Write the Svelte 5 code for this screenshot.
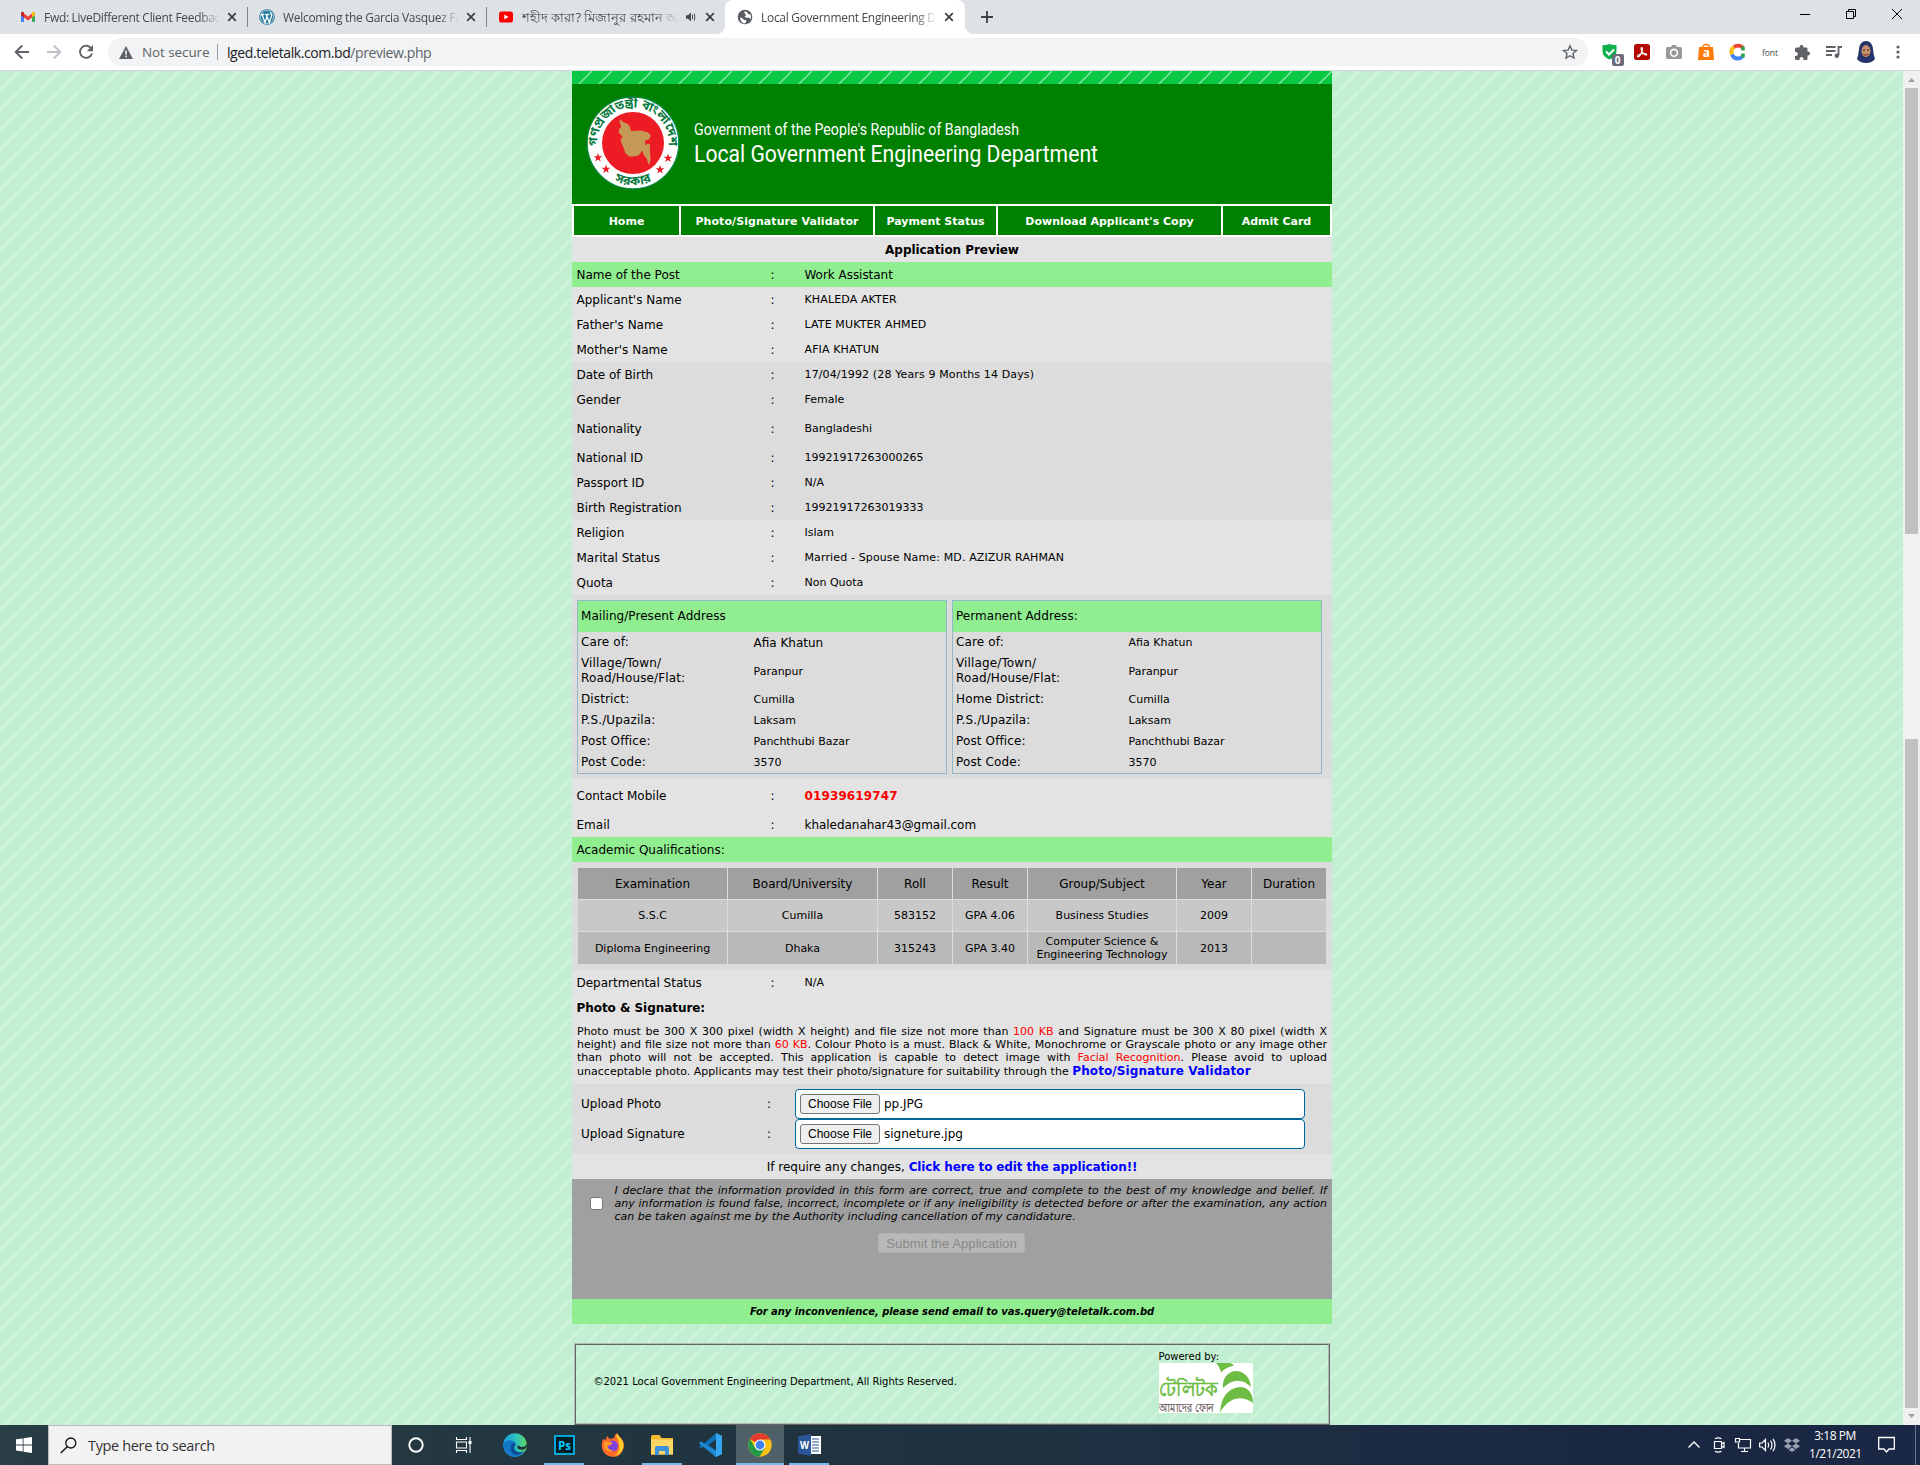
<script>
  const personal = [
    ['Name of the Post', 'Work Assistant', 'green big'],
    ["Applicant's Name", 'KHALEDA AKTER', 'caps'],
    ["Father's Name", 'LATE MUKTER AHMED', 'caps'],
    ["Mother's Name", 'AFIA KHATUN', 'caps'],
    ['Date of Birth', '17/04/1992 (28 Years 9 Months 14 Days)', 'dark caps'],
    ['Gender', 'Female', 'dark'],
    ['Nationality', 'Bangladeshi', 'dark tall'],
    ['National ID', '19921917263000265', 'dark'],
    ['Passport ID', 'N/A', 'dark'],
    ['Birth Registration', '19921917263019333', 'dark'],
    ['Religion', 'Islam', ''],
    ['Marital Status', 'Married - Spouse Name: MD. AZIZUR RAHMAN', 'caps'],
    ['Quota', 'Non Quota', '']
  ];
  const contact = [
    ['Contact Mobile', '01939619747', 'tall phone'],
    ['Email', 'khaledanahar43@gmail.com', 'big']
  ];
  const addresses = [
    { title: 'Mailing/Present Address', district: 'District:', big: true },
    { title: 'Permanent Address:', district: 'Home District:', big: false }
  ];
  const heads = ['Examination', 'Board/University', 'Roll', 'Result', 'Group/Subject', 'Year', 'Duration'];
  const exams = [
    ['S.S.C', 'Cumilla', '583152', 'GPA 4.06', 'Business Studies', '2009', ''],
    ['Diploma Engineering', 'Dhaka', '315243', 'GPA 3.40', 'Computer Science & Engineering Technology', '2013', '']
  ];
  const nav = [
    ['Home', 'w1'],
    ['Photo/Signature Validator', 'w2'],
    ['Payment Status', 'w3'],
    ["Download Applicant's Copy", 'w4'],
    ['Admit Card', 'w5']
  ];
</script>

{#snippet cross()}
  <svg class="x" width="10" height="10" viewBox="0 0 10 10"><path d="M1.2 1.2l7.6 7.6M8.800 1.200l-7.600 7.600" stroke="#3c4043" stroke-width="1.700" fill="none" /></svg>
{/snippet}

{#snippet row(label, value, kind)}
  <div class="row {kind}">
    <span class="label">{label}</span><span class="colon">:</span><span class="value">{value}</span>
  </div>
{/snippet}

<div class="screen">
  <div class="tabs">
    <div class="tab first">
      <svg width="16" height="16" viewBox="0 0 16 16">
        <path d="M1 3.500V13h3V7z" fill="#4285f4" /><path d="M15 3.500V13h-3V7z" fill="#34a853" />
        <path d="M4 4.500v4L8 11.500l4-3v-4L8 7.500z" fill="#ea4335" />
        <path d="M1 4.500C1 2.600 2.600 2.300 4 3.500v5L1 6.300z" fill="#c5221f" />
        <path d="M15 4.500C15 2.600 13.400 2.300 12 3.500v5l3-2.200z" fill="#fbbc04" />
      </svg>
      <span class="title">Fwd: LiveDifferent Client Feedback</span>
      {@render cross()}
    </div>
    <div class="tab sep">
      <svg width="16" height="16" viewBox="0 0 16 16">
        <circle cx="8" cy="8" r="7.800" fill="#21759b" /><circle cx="8" cy="8" r="6.600" fill="none" stroke="#fff" stroke-width=".6" />
        <path d="M1.800 5.500h3.600M6.300 5.500h4M3 5.500l3 8 2-6M7.300 5.500l3 8 2.300-7q0-2-1.500-3" stroke="#fff" stroke-width="1.300" fill="none" />
      </svg>
      <span class="title">Welcoming the Garcia Vasquez Fa</span>
      {@render cross()}
    </div>
    <div class="tab sep">
      <svg width="16" height="16" viewBox="0 0 16 16"><rect x="1" y="2.500" width="14" height="11" rx="2.600" fill="#f00" /><path d="M6.300 5.500v5l4.200-2.500z" fill="#fff" /></svg>
      <span class="title bn">শহীদ কারা? মিজানুর রহমান আ</span>
      <svg class="speaker" width="14" height="12" viewBox="0 0 14 12"><path d="M3 4.200h2L8 1.500v9L5 7.800H3z" fill="#45494d" /><path d="M9.500 3.800v4.400M11.300 2.500q1 3.500 0 7" stroke="#45494d" fill="none" /></svg>
      {@render cross()}
    </div>
    <div class="tab active">
      <svg width="16" height="16" viewBox="0 0 16 16"><circle cx="8" cy="8" r="7.300" fill="#5a5e63" /><path d="M3 8.500q2 0 3 1.500 1 1.500 3 1 1 1-1 3.500Q3.500 14 3 8.500zM8 2q-1.500 2 .5 3 1 2-1 2.500 1 1.500 3 1 2 0 3.500 1.500.5-3-1-5l-1.500.5Q10.500 3 8 2z" fill="#fff" /></svg>
      <span class="title">Local Government Engineering D</span>
      {@render cross()}
    </div>
    <svg class="plus" width="12" height="12" viewBox="0 0 12 12"><path d="M6 0v12M0 6h12" stroke="#3c4043" stroke-width="1.800" /></svg>
    <div class="window">
      <svg width="10" height="10"><path d="M0 5.500h10" stroke="#000" /></svg>
      <svg width="10" height="10"><path d="M.5 2.500h7v7h-7zM2.500 2.500v-2h7v7h-2" stroke="#000" fill="none" /></svg>
      <svg width="10" height="10"><path d="M0 0l10 10M10 0L0 10" stroke="#000" /></svg>
    </div>
  </div>

  <div class="toolbar">
    <div class="navicons">
      <svg width="16" height="16" viewBox="0 0 16 16"><path d="M15 8H2M8.200 1.500L1.700 8l6.500 6.500" stroke="#5f6368" stroke-width="1.900" fill="none" /></svg>
      <svg width="16" height="16" viewBox="0 0 16 16"><path d="M1 8h13M7.800 1.500L14.300 8l-6.500 6.500" stroke="#bdc1c6" stroke-width="1.900" fill="none" /></svg>
      <svg width="16" height="16" viewBox="0 0 16 16"><path d="M13.300 4.500A6.100 6.100 0 1 0 14 9.500" stroke="#5f6368" stroke-width="1.900" fill="none" /><path d="M15 1v6.200H8.800z" fill="#5f6368" /></svg>
    </div>
    <div class="pill">
      <svg width="14" height="13" viewBox="0 0 14 13"><path d="M7 0l7 13H0z" fill="#5f6368" /><path d="M7 4.500v4M7 9.500v1.700" stroke="#fff" stroke-width="1.500" /></svg>
      <span class="insecure">Not secure</span><i></i><span class="url"><b>lged.teletalk.com.bd</b>/preview.php</span>
      <svg class="star" width="16" height="16" viewBox="0 0 16 16"><path d="M8 1.800l1.900 4.300 4.600.4-3.500 3.100 1 4.500L8 11.700l-4 2.400 1-4.500L1.500 6.500l4.600-.4z" stroke="#5f6368" stroke-width="1.400" fill="none" /></svg>
    </div>
    <div class="exts">
      <span class="ext"><svg width="16" height="16" viewBox="0 0 16 16"><path d="M7.500 0q4 1.500 7 1v6.500q0 5-7 8-7-3-7-8V1q3 .500 7-1z" fill="#0db14b" /><path d="M4 7.500l3 3 5-5" stroke="#fff" stroke-width="2" fill="none" /><rect x="10" y="10" width="12" height="12" rx="2" fill="#6b6b7b" /><text x="12.700" y="19.700" font-size="10" fill="#fff" font-weight="bold">0</text></svg></span>
      <span class="ext"><svg width="16" height="16"><rect width="16" height="16" rx="2.500" fill="#b30b00" /><path d="M7.500 3.500q1.600 0 .5 3.500-1 3.500-3 5.500-1.600.800-1.500-.300.500-1.700 5-2.400 4-.5 4.200.7-.5 1.400-3-.900Q7 7 7 4.500q0-1 .5-1z" stroke="#fff" stroke-width="1.100" fill="none" /></svg></span>
      <span class="ext"><svg width="16" height="14"><path d="M1.500 2H5l1-2h4l1 2h3.500Q16 2 16 3.500v9q0 1.500-1.500 1.500h-13Q0 14 0 12.500v-9Q0 2 1.500 2z" fill="#999" /><circle cx="8" cy="7.800" r="3.400" fill="none" stroke="#fff" stroke-width="1.600" /></svg></span>
      <span class="ext"><svg width="16" height="16"><path d="M4.500 4q0-3.500 3.500-3.500T11.500 4" stroke="#ff7a00" stroke-width="1.300" fill="none" /><path d="M1 3h14l1 13H0z" fill="#ff7a00" /><text x="4.700" y="13" font-size="12" font-weight="bold" fill="#fff">a</text></svg></span>
      <span class="ext"><svg width="16" height="16" fill="none" stroke-width="3.800"><path d="M12.800 3.600A6.300 6.300 0 0 0 4 3.100" stroke="#ea4335" /><path d="M4 3.100A6.300 6.300 0 0 0 2 10.500" stroke="#fbbc04" /><path d="M2 10.500a6.300 6.300 0 0 0 6 4" stroke="#4285f4" /><path d="M8 14.500a6.300 6.300 0 0 0 4.800-2.400" stroke="#4285f4" /><path d="M13 2.500v4M13 9.500v4" stroke="#2ba24c" stroke-width="3.500" /></svg></span>
      <span class="ext font">font</span>
      <span class="ext"><svg width="15" height="15" viewBox="0 0 15 15"><path d="M0 4q0-1.500 1.500-1.500H4.500V2a2 2 0 0 1 4 0v.5h3Q12.500 2.500 12.500 4v2.500H13a2 2 0 0 1 0 4h-.5v3q0 1.500-1.500 1.500H8.500v-1a2 2 0 0 0-4 0v1h-3Q0 15 0 13.500V11h.8a2 2 0 0 0 0-4H0z" fill="#5f6368" /></svg></span>
      <span class="ext"><svg width="16" height="12" viewBox="0 0 16 12"><path d="M0 1h9.500M0 5h9.500M0 9h6M12.500 9.500V1H16" stroke="#5f6368" stroke-width="1.800" fill="none" /><circle cx="10.800" cy="9.700" r="2.200" fill="#5f6368" /></svg></span>
      <span class="ext"><svg width="18" height="22" viewBox="0 0 18 22"><path d="M9 0q6 0 7 8 .5 6 2 10-3 4-9 4T0 18q1.500-4 2-10Q3 0 9 0z" fill="#27346b" /><ellipse cx="9" cy="10" rx="4.500" ry="6" fill="#c98f6b" /><path d="M6.500 13.200q2.500 1.500 5 0" stroke="#8c3b36" stroke-width="1.200" fill="none" /><path d="M6 9h2M10 9h2" stroke="#30201c" /></svg></span>
      <span class="ext"><svg width="4" height="14"><g fill="#5f6368"><circle cx="2" cy="2" r="1.600" /><circle cx="2" cy="7" r="1.600" /><circle cx="2" cy="12" r="1.600" /></g></svg></span>
    </div>
  </div>

  <div class="page">
    <div class="body">
      <div class="strip"></div>
      <header>
        <svg class="seal" width="94" height="94" viewBox="0 0 94 94">
          <defs>
            <path id="arc-top" d="M11.700 53.200A35.800 35.800 0 1 1 82.300 53.200" />
            <path id="arc-bottom" d="M18 77.500A42 42 0 0 0 76 77.500" />
          </defs>
          <circle cx="47" cy="47" r="45.800" fill="#fff" stroke="#0b8a4a" stroke-width="1.200" />
          <circle cx="47" cy="47" r="31" fill="#ed1c24" />
          <path d="M34 23l3 3 5 2 2 3 1 4 10-.500 7 2 3 3-2 4-4 1 .500 5 2-2 2.500 1v7l.5 8-1.500 6-2.500-7-3-4-1-4-4 5-5 1h-4l-4-3-2-6-3-7 2-4-4-4 1-4 2-2-2-4z" fill="#c49a56" />
          <g fill="#ed1c24">
            {#each [[12, 61.500], [20, 73], [74, 73.500], [82, 62]] as [cx, cy]}
              <path transform="translate({cx} {cy}) scale(1.100)" d="M0-4l1 2.800h3L1.600.600l.9 3L0 1.800l-2.500 1.800.9-3L-4-1.200h3z" />
            {/each}
          </g>
          <g class="sealtext">
            <text font-size="12.500"><textPath href="#arc-top" startOffset="50%" text-anchor="middle" textLength="118" lengthAdjust="spacingAndGlyphs">গণপ্রজাতন্ত্রী বাংলাদেশ</textPath></text>
            <text font-size="12.500"><textPath href="#arc-bottom" startOffset="50%" text-anchor="middle" textLength="38" lengthAdjust="spacingAndGlyphs">সরকার</textPath></text>
          </g>
        </svg>
        <svg class="names" width="420" height="60">
          <text x="0" y="21" font-size="16.500" textLength="325" lengthAdjust="spacingAndGlyphs">Government of the People's Republic of Bangladesh</text>
          <text x="0" y="48" font-size="23.500" textLength="404" lengthAdjust="spacingAndGlyphs">Local Government Engineering Department</text>
        </svg>
      </header>
      <nav>
        {#each nav as [name, w]}<span class={w}>{name}</span>{/each}
      </nav>
      <div class="row center heading">Application Preview</div>
      {#each personal as [l, v, k]}{@render row(l, v, k)}{/each}

      <div class="addresses">
        {#each addresses as a}
          <div class="address">
            <div class="ahead">{a.title}</div>
            <div class="arow"><span>Care of:</span><em class:full={a.big}>Afia Khatun</em></div>
            <div class="arow two"><span>Village/Town/<br />Road/House/Flat:</span><em>Paranpur</em></div>
            <div class="arow"><span>{a.district}</span><em>Cumilla</em></div>
            <div class="arow"><span>P.S./Upazila:</span><em>Laksam</em></div>
            <div class="arow"><span>Post Office:</span><em>Panchthubi Bazar</em></div>
            <div class="arow"><span>Post Code:</span><em>3570</em></div>
          </div>
        {/each}
      </div>

      {#each contact as [l, v, k]}{@render row(l, v, k)}{/each}
      <div class="row green">Academic Qualifications:</div>

      <div class="academic">
        <div class="grid">
          {#each heads as h}<div class="th">{h}</div>{/each}
          {#each exams as exam, i}{#each exam as cell}<div class="td" class:odd={i === 1}>{cell}</div>{/each}{/each}
        </div>
      </div>

      {@render row('Departmental Status', 'N/A', '')}
      <div class="row heading">Photo &amp; Signature:</div>
      <div class="notes">
        <p class="just">Photo must be 300 X 300 pixel (width X height) and file size not more than <u>100 KB</u> and Signature must be 300 X 80 pixel (width X</p>
        <p class="just">height) and file size not more than <u>60 KB</u>. Colour Photo is a must. Black &amp; White, Monochrome or Grayscale photo or any image other</p>
        <p class="just">than photo will not be accepted. This application is capable to detect image with <u>Facial Recognition</u>. Please avoid to upload</p>
        <p class="last">unacceptable photo. Applicants may test their photo/signature for suitability through the <b>Photo/Signature Validator</b></p>
      </div>

      <div class="uploads">
        {#each [['Upload Photo', 'pp.JPG'], ['Upload Signature', 'signeture.jpg']] as [l, f]}
          <div class="upload">
            <span class="ul">{l}</span><span class="uc">:</span>
            <div class="file"><button>Choose File</button>{f}</div>
          </div>
        {/each}
      </div>
      <div class="row center">If require any changes,&nbsp;<b class="link">Click here to edit the application!!</b></div>

      <div class="declare">
        <div class="terms">
          <span class="check"></span>
          <div>
            <p class="just">I declare that the information provided in this form are correct, true and complete to the best of my knowledge and belief. If</p>
            <p class="just">any information is found false, incorrect, incomplete or if any ineligibility is detected before or after the examination, any action</p>
            <p>can be taken against me by the Authority including cancellation of my candidature.</p>
          </div>
        </div>
        <button class="submit" disabled>Submit the Application</button>
      </div>
      <div class="row green center help">For any inconvenience, please send email to vas.query@teletalk.com.bd</div>

      <footer>
        <span class="copy">©2021 Local Government Engineering Department, All Rights Reserved.</span>
        <div class="powered">
          <span>Powered by:</span>
          <svg width="94" height="50" viewBox="0 0 94 50">
            <rect width="94" height="50" fill="#fff" />
            <g fill="#6dbd45">
              <path d="M57 0h14q3 .500 4 2.500-9 2-13 7Q61 4 57 0z" />
              <path d="M64 25C63 15 69 9 76 8c9 0 15 6 16 16-9-9-19-8-28 1z" />
              <path d="M61 49.500C62 34 69 25 81 24c8 0 13 6 13 16-10-8-24-7-33 9.500z" />
              <text x="0" y="33" font-size="20" stroke="#6dbd45" stroke-width=".7" textLength="59" lengthAdjust="spacingAndGlyphs">টেলিটক</text>
            </g>
            <text x="0" y="48.500" font-size="12" fill="#5a4a4a" stroke="#5a4a4a" stroke-width=".2" textLength="55" lengthAdjust="spacingAndGlyphs">আমাদের ফোন</text>
          </svg>
        </div>
      </footer>
    </div>
    <div class="scroll">
      <svg width="17" height="17"><path d="M5 11l3.500-4 3.500 4z" fill="#a3a3a3" /></svg>
      <div class="thumb a"></div>
      <div class="thumb b"></div>
      <svg width="17" height="17"><path d="M5 6l3.500 4L12 6z" fill="#a3a3a3" /></svg>
    </div>
  </div>

  <div class="taskbar">
    <div class="cell start"><svg width="16" height="16"><path d="M0 2.300L6.700 1.400V7.500H0zM7.500 1.200L16 0v7.500H7.500zM0 8.400h6.700v6.100L0 13.600zM7.500 8.400H16V16l-8.500-1.200z" fill="#fff" /></svg></div>
    <div class="search">
      <svg width="17" height="17"><circle cx="10.800" cy="6" r="5" fill="none" stroke="#111" stroke-width="1.300" /><path d="M7.200 9.700L.8 16" stroke="#111" stroke-width="1.400" /></svg>
      <span>Type here to search</span>
    </div>
    <div class="cell"><svg width="16" height="16"><circle cx="8" cy="8" r="6.700" fill="none" stroke="#fff" stroke-width="1.900" /></svg></div>
    <div class="cell"><svg width="16" height="16"><path d="M.5 0v2.500h10V0M.5 16v-2.500h10V16M.5 5h10v6H.5zM14 0v16" stroke="#fff" fill="none" stroke-width="1.100" /><path d="M12.500 4h3v3h-3z" fill="#fff" /></svg></div>
    <div class="cell browser"><svg width="24" height="24" viewBox="0 0 24 24">
      <defs><linearGradient id="edge" x1="0" x2="1"><stop offset="0" stop-color="#1b9de2" /><stop offset=".55" stop-color="#2cc4c0" /><stop offset="1" stop-color="#5fd65b" /></linearGradient></defs>
      <circle cx="12" cy="12" r="11.800" fill="url(#edge)" />
      <path d="M.4 11Q3 6 9 7.500q4 1.200 4 4-4 4.500 1 7 4 1.800 7.800-1Q18 24 12 24 0 23 .4 11z" fill="#1478c8" />
      <path d="M8.500 11Q6 16 10 20.500 15 24 21 18.500q-5 2-8.500-.5T12.500 12q-1-3-4-1z" fill="#0d4a94" />
      <path d="M13 11q3 1 1 4 2 2.500 7 1.500 3-1.500 3-6-2 4-6 3.500z" fill="#20343f" />
    </svg></div>
    <div class="cell run"><svg width="21" height="20"><rect x="1" y="1" width="19" height="18" fill="#001d26" stroke="#00c8ff" stroke-width="1.600" /><text x="4" y="14.500" font-size="11.500" fill="#00c8ff" font-weight="bold" textLength="13" lengthAdjust="spacingAndGlyphs">Ps</text></svg></div>
    <div class="cell"><svg width="24" height="24" viewBox="0 0 24 24"><path d="M2 6l2.500 1L6 3l3 3 4-1q0-3 3-5 1 3 4 5 4 5 2.500 10.500Q20 24 12 24 2 23 .8 14 .5 9 2 6z" fill="#ff6a2b" /><path d="M15 3q1-2 1.500-2.500 1 3 4 5.500 3.500 5 1 11-2.500 5-8 5.500 5-3 4.500-9Q18 7 15 3z" fill="#ffca28" /><circle cx="11.500" cy="13" r="5.500" fill="#7c3fe0" /><path d="M3 9q5-1 8 .500 1.500 1-1.500 2.500l-3 1q1 5 7 4-5 4-10-1Q2 13 3 9z" fill="#ff9a24" /></svg></div>
    <div class="cell run"><svg width="22" height="20"><path d="M0 1.500Q0 0 1.500 0h7l2 3H22v16.500H0z" fill="#f4b62c" /><path d="M0 4.500h22v15H0z" fill="#ffd766" /><path d="M4 20v-7q0-2 2-2h10q2 0 2 2v7h-4v-4H8v4z" fill="#3c92dd" /></svg></div>
    <div class="cell"><svg width="24" height="24" viewBox="0 0 24 24"><path d="M17 0l6 3v18l-6 3L4.500 13 2 15.300.5 14.500v-1.200L2 12 .5 10.700V9.500L2 8.700 4.500 11z" fill="#0f72b8" /><path d="M17 24L.5 10.700V9.500L2 8.500 17 18z" fill="#1f8ad2" /><path d="M17 6.500v11L9.500 12z" fill="#20343f" /><path d="M17 0l6 3v18l-6 3z" fill="#35a7f0" /></svg></div>
    <div class="cell chrome"><svg width="24" height="24" viewBox="0 0 24 24"><circle cx="12" cy="12" r="11.700" fill="#fbc116" /><path d="M12 12L1.900 6A11.700 11.700 0 0 1 22.200 6.500H12z" fill="#e33b2e" /><path d="M1.900 6A11.700 11.700 0 0 0 11.500 23.700L17 15 12 12 7 14.500z" fill="#229a48" /><circle cx="12" cy="12" r="5.500" fill="#fff" /><circle cx="12" cy="12" r="4.400" fill="#3f7ff0" /></svg></div>
    <div class="cell run"><svg width="23" height="22"><path d="M10 2h13v18H10z" fill="#fff" /><path d="M14 5h7M14 8h7M14 11h7M14 14h7M14 17h7" stroke="#2b579a" stroke-width="1.200" /><path d="M0 2.500L13 0v22L0 19.500z" fill="#2b579a" /><text x="2" y="15" font-size="10.500" font-weight="bold" fill="#fff" textLength="9" lengthAdjust="spacingAndGlyphs">W</text></svg></div>
    <div class="tray">
      <svg width="12" height="16"><path d="M.5 10.500L6 5l5.500 5.500" stroke="#fff" stroke-width="1.400" fill="none" /></svg>
      <svg width="12" height="16"><path d="M1.500 4.500h7v7h-7zM8.500 7L11 5.500v5L8.500 9M2 1.800Q5 0 8.500 1.800M2 14.200Q5 16 8.500 14.200" stroke="#fff" stroke-width="1.200" fill="none" /></svg>
      <svg width="16" height="16"><path d="M5 2.500h10.500v8.500H3.500V6M.5 1.500h4v3.500h-4zM9.500 11v3M6 14.500h7" stroke="#fff" stroke-width="1.200" fill="none" /></svg>
      <svg width="17" height="16"><path d="M.6 6h2.500L6.500 2.500v11L3.100 10H.6zM9 5.500q1.500 2.500 0 5M11.500 3.500q3 4.500 0 9M14 1.800q4 6 0 12.500" stroke="#fff" stroke-width="1.200" fill="none" /></svg>
      <svg width="16" height="16"><path d="M4 1l4 2.700-4 2.700L0 3.700zM12 1l4 2.700-4 2.700-4-2.700zM4 6.600l4 2.700L4 12 0 9.300zM12 6.600l4 2.700-4 2.700-4-2.700zM8 10.500l3.500 2.200L8 15l-3.500-2.300z" fill="#99a3b0" /></svg>
      <div class="clock"><span>3:18 PM</span><span>1/21/2021</span></div>
      <svg class="note" width="17" height="18"><path d="M.7 1.500h15.600v11.500h-5.300L8.500 16 6 13H.7z" stroke="#fff" stroke-width="1.300" fill="none" /></svg>
      <i class="edge"></i>
    </div>
  </div>
</div>

<style>
  :global(body) { margin: 0; background: #c2efd2; }
  .screen, .screen * { box-sizing: border-box; }
  .screen { width: 1920px; height: 1465px; display: flex; flex-direction: column; overflow: hidden; font: 12px 'DejaVu Sans', sans-serif; color: #000; }
  svg { display: block; flex: none; overflow: visible; }
  p { margin: 0; }

  .tabs { height: 34px; flex: none; background: #dee1e6; display: flex; align-items: center; font: 12px 'Open Sans', sans-serif; color: #45494d; }
  .tab { display: flex; align-items: center; width: 239px; padding: 0 10px 0 11px; gap: 8px; height: 20px; position: relative; }
  .tab.first { width: 247px; padding-left: 20px; }
  .tab.sep { border-left: 1px solid #808387; }
  .tab.active { width: 240px; padding: 0 11px 0 12px; background: #fff; height: 34px; border-radius: 8px 8px 0 0; }
  .tab.active::before, .tab.active::after { content: ''; position: absolute; bottom: 0; width: 8px; height: 8px; }
  .tab.active::before { left: -8px; background: radial-gradient(circle at 0 0, transparent 7.5px, #fff 8px); }
  .tab.active::after { right: -8px; background: radial-gradient(circle at 100% 0, transparent 7.5px, #fff 8px); }
  .title { flex: 1; min-width: 0; white-space: nowrap; overflow: hidden; letter-spacing: -.3px; mask-image: linear-gradient(90deg, #000 calc(100% - 22px), transparent); }
  .bn { font-size: 13px; line-height: 20px; letter-spacing: 0; }
  .x { margin-left: -1px; }
  .speaker { margin-right: 1px; margin-left: -3px; }
  .plus { margin-left: 16px; }
  .window { margin-left: auto; display: flex; gap: 36px; padding-right: 18px; margin-top: -6px; }

  .toolbar { height: 37px; flex: none; background: #fff; border-bottom: 1px solid #d3d5d9; display: flex; align-items: center; }
  .navicons { display: flex; gap: 16px; width: 108px; padding-left: 14px; }
  .pill { width: 1480px; height: 28px; border-radius: 14px; background: #f1f3f4; display: flex; align-items: center; padding: 0 10px 0 11px; font: 14px 'Open Sans', sans-serif; color: #5f6368; }
  .insecure { margin-left: 9px; width: 75px; letter-spacing: -.1px; font-size: 13.500px; white-space: nowrap; }
  .pill i { width: 1px; height: 16px; background: #9aa0a6; }
  .url { margin-left: 9px; letter-spacing: -.42px; }
  .url b { font-weight: 400; color: #202124; }
  .star { margin-left: auto; }
  .exts { display: flex; padding-left: 6px; font-family: 'Open Sans', sans-serif; }
  .ext { width: 32px; height: 28px; display: flex; align-items: center; justify-content: center; }
  .font { font-size: 8.500px; color: #444; }

  .page { height: 1354px; flex: none; display: flex; background: linear-gradient(135deg, transparent 45.5%, #d4f4de 48.500%, #d4f4de 51.500%, transparent 54.5%) 19px 0 / 20px 20px, #c2efd1; }
  .body { margin-left: 572px; width: 760px; margin-right: 571px; }
  .strip { height: 13px; background: linear-gradient(135deg, transparent 46%, #86e5a3 49%, #86e5a3 51%, transparent 54%) 0 0 / 20px 20px, #09c843; }
  header { height: 120px; background: #008000; display: flex; align-items: flex-start; padding: 12px 0 0 14px; }
  .seal { width: 94px; height: 94px; }
  .sealtext { fill: #0b7a43; font-weight: bold; font-family: 'Noto Sans Bengali', 'DejaVu Sans', sans-serif; }
  .names { margin: 18px 0 0 14px; fill: #fff; font-family: Roboto, sans-serif; }
  nav { height: 33px; background: #fff; padding: 2px; display: flex; gap: 2px; font-weight: bold; font-size: 11px; color: #fff; }
  nav span { height: 29px; background: #008000; display: flex; align-items: center; justify-content: center; white-space: nowrap; padding-top: 1px; }
  .w1 { width: 105px; } .w2 { width: 192px; letter-spacing: .07px; } .w3 { width: 121px; } .w4 { width: 223px; } .w5 { width: 107px; }

  .row { height: 25px; background: #e3e3e3; display: flex; align-items: center; padding-left: 4.500px; white-space: nowrap; }
  .row.center { justify-content: center; padding: 0; }
  .heading { font-weight: bold; letter-spacing: -.05px; }
  .dark { background: #dcdcdc; }
  .green { background: #90ee90; }
  .tall { height: 33px; }
  .label { width: 194px; }
  .colon { width: 34px; }
  .value { font-size: 11px; }
  .caps .value { letter-spacing: .13px; }
  .big .value { font-size: 12px; letter-spacing: -.04px; }
  .phone .value { font-size: 12px; font-weight: bold; color: #f00; letter-spacing: .12px; }

  .addresses { height: 184px; background: #dcdcdc; display: flex; gap: 5px; padding: 5px; }
  .address { width: 370px; height: 174px; border: 1px solid #95b8c9; }
  .ahead { height: 31px; line-height: 31px; background: #90ee90; padding-left: 3px; letter-spacing: .05px; }
  .arow { height: 21px; display: flex; align-items: center; padding-left: 3px; }
  .arow span { width: 172.500px; line-height: 15px; letter-spacing: .13px; }
  .arow em { font-style: normal; font-size: 11px; }
  .arow em.full { font-size: 12px; }
  .arow.two { height: 36px; }

  .academic { height: 108px; background: #dcdcdc; padding: 6px; }
  .grid { display: grid; grid-template-columns: 149px 149px 74px 74px 148px 74px 74px; grid-template-rows: 31px 31px 32px; gap: 1px; }
  .grid div { display: flex; align-items: center; justify-content: center; text-align: center; }
  .th { background: #a0a0a0; }
  .td { background: #c8c8c8; font-size: 11px; line-height: 13px; }
  .td.odd { background: #b9b9b9; }

  .notes { height: 64px; background: #e3e3e3; padding: 5px 5px 0; font-size: 11px; line-height: 13px; white-space: nowrap; }
  .just { text-align: justify; text-align-last: justify; white-space: normal; }
  .notes u { text-decoration: none; color: #f00; }
  .notes b, .link { color: #00f; }
  .notes b { font-size: 12px; letter-spacing: .1px; }
  .link { letter-spacing: -.12px; }
  .last { line-height: 14px; letter-spacing: .02px; }

  .uploads { height: 70px; background: #dcdcdc; padding: 5px 0 0 9px; }
  .upload { display: flex; align-items: center; height: 30px; }
  .ul { width: 186px; }
  .uc { width: 28px; }
  .file { width: 510px; height: 30px; border: 1px solid #069; border-radius: 4px; background: #fff; display: flex; align-items: center; padding-left: 4px; gap: 4px; }
  .file button { width: 80px; height: 20px; padding: 0; border: 1px solid #767676; border-radius: 3px; background: #efefef; font: 12px 'Liberation Sans', sans-serif; color: #000; }

  .declare { height: 120px; background: #a0a0a0; padding: 5px 5px 0 18px; display: flex; flex-direction: column; align-items: center; }
  .terms { display: flex; align-items: center; gap: 12px; width: 100%; font: italic 11px/13px 'DejaVu Sans', sans-serif; }
  .terms div { flex: 1; white-space: nowrap; margin-left: -.500px; }
  .check { width: 13px; height: 13px; background: #fff; border: 1px solid #767676; border-radius: 2.500px; }
  .submit { margin: 10px 14px 0 0; width: 147px; height: 20px; padding: 0; border: 1px solid #b0b0b0; border-radius: 2px; background: #b8b8b8; color: #888; font: 13.200px 'Liberation Sans', sans-serif; }
  .help { font: italic bold 10px 'DejaVu Sans', sans-serif; letter-spacing: -.05px; }

  footer { width: 756px; height: 82px; margin: 19px 2px 0; border: 2px ridge #b8b8b8; display: flex; align-items: center; font-size: 10px; padding: 0 0 5px 17.500px; }
  .copy { width: 565px; white-space: nowrap; }
  .powered { margin-top: -1px; }
  .powered > span { display: block; line-height: 13px; }

  .scroll { width: 17px; background: #f1f1f1; display: flex; flex-direction: column; }
  .thumb { width: 13px; margin-left: 2px; background: #c1c1c1; }
  .thumb.a { height: 446px; }
  .thumb.b { height: 669px; margin-top: 205px; }

  .taskbar { height: 40px; flex: none; display: flex; background: linear-gradient(90deg, #293d46, #20343f 40%, #1e2f41 60%, #1a2742 85%, #1a2845); font-family: 'Open Sans', sans-serif; }
  .cell { width: 48px; height: 40px; display: flex; align-items: center; justify-content: center; }
  .search { width: 344px; background: #f2f2f2; border: 1px solid #bcbcbc; display: flex; align-items: center; padding-left: 11px; gap: 11px; font-size: 14.500px; color: #333; letter-spacing: -.35px; }
  .browser { margin-left: 3px; }
  .run { width: 40px; margin: 0 5px; border-bottom: 2px solid #76b9ed; padding-top: 2px; }
  .chrome { margin-left: 1px; background: #4f6068; border-bottom: 2px solid #76b9ed; padding-top: 2px; }
  .tray { margin-left: auto; display: flex; align-items: center; color: #fff; font-size: 12px; }
  .tray svg { margin-right: 10px; }
  .tray svg:nth-child(1) { margin-right: 13px; }
  .tray svg:nth-child(4), .tray svg:nth-child(3) { margin-right: 8px; }
  .clock { width: 52px; display: flex; flex-direction: column; line-height: 18px; text-align: center; letter-spacing: -.45px; margin-right: 17px; margin-left: -1px; white-space: nowrap; }
  .tray .note { margin-right: 20px; }
  .edge { width: 1px; height: 40px; background: #6b7688; margin-right: 4px; }
</style>
